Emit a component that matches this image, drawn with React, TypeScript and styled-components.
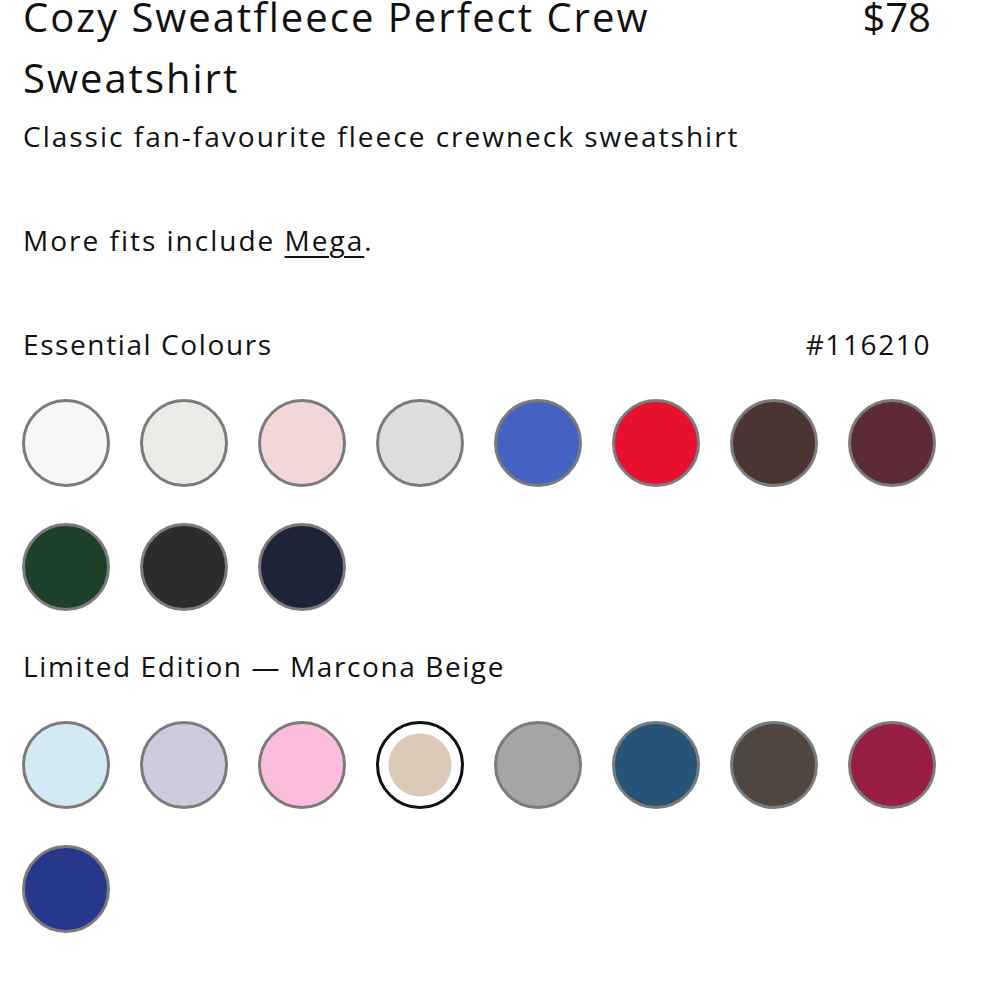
import styled, { createGlobalStyle } from "styled-components";

const GlobalStyle = createGlobalStyle`
  html, body {
    margin: 0;
    padding: 0;
    background: #ffffff;
  }
  body {
    font-family: "Open Sans", "Noto Sans", sans-serif;
    color: #111111;
  }
`;

type Colour = {
  name: string;
  hex: string;
  selected?: boolean;
};

const ESSENTIAL_COLOURS: Colour[] = [
  { name: "White", hex: "#f7f7f7" },
  { name: "Heathered Bone", hex: "#ecebe8" },
  { name: "Flush Pink", hex: "#f2d6d8" },
  { name: "Heathered Core Ultra Light Grey", hex: "#dddddd" },
  { name: "Blue", hex: "#4362c2" },
  { name: "Red", hex: "#e8102d" },
  { name: "Brown", hex: "#4a3530" },
  { name: "Maroon", hex: "#5e2a35" },
  { name: "Green", hex: "#1c4128" },
  { name: "Charcoal", hex: "#2a2d2a" },
  { name: "Navy", hex: "#1e2438" },
];

const LIMITED_COLOURS: Colour[] = [
  { name: "Sky", hex: "#d3eaf4" },
  { name: "Lavender", hex: "#cfcbdc" },
  { name: "Pink", hex: "#fcbcdb" },
  { name: "Marcona Beige", hex: "#dccab9", selected: true },
  { name: "Grey", hex: "#a6a5a5" },
  { name: "Blue", hex: "#255479" },
  { name: "Heathered Brown", hex: "#4f4640" },
  { name: "Raspberry", hex: "#981f43" },
  { name: "Royal", hex: "#27378c" },
];

const Page = styled.main`
  width: 908px;
  margin-top: -14px;
  padding: 0 0 0 23px;
`;

const Header = styled.header`
  display: flex;
  justify-content: space-between;
  align-items: flex-start;
  gap: 24px;
`;

const Title = styled.h1`
  margin: 0;
  max-width: 700px;
  font-size: 40px;
  font-weight: 400;
  line-height: 61px;
  letter-spacing: 2px;
`;

const Price = styled.span`
  font-size: 40px;
  line-height: 61px;
  letter-spacing: 0;
  white-space: nowrap;
`;

const Description = styled.p`
  margin: 8px 0 0;
  font-size: 28px;
  line-height: 40px;
  letter-spacing: 2px;
`;

const FitNote = styled.p`
  margin: 64px 0 0;
  font-size: 28px;
  line-height: 40px;
  letter-spacing: 2px;

  a {
    color: inherit;
    text-decoration: underline;
    text-underline-offset: 5px;
    text-decoration-thickness: 2px;
  }
`;

const Section = styled.section<{ $first?: boolean }>`
  margin-top: ${(props) => (props.$first ? "64px" : "35px")};
`;

const SectionHeader = styled.div`
  display: flex;
  justify-content: space-between;
  font-size: 28px;
  line-height: 40px;
  letter-spacing: 1.6px;
`;

const SwatchGrid = styled.ul`
  list-style: none;
  margin: 35px 0 0 -1px;
  padding: 0;
  display: grid;
  grid-template-columns: repeat(8, 88px);
  column-gap: 30px;
  row-gap: 36px;
`;

const Swatch = styled.button<{ $hex: string; $selected?: boolean }>`
  display: block;
  width: 88px;
  height: 88px;
  padding: 0;
  border-radius: 50%;
  cursor: pointer;
  box-sizing: border-box;
  border: 3px solid ${(props) => (props.$selected ? "#111111" : "#7b7b7b")};
  background: ${(props) => props.$hex};
  ${(props) =>
    props.$selected
      ? `background: radial-gradient(circle, ${props.$hex} 0 31px, #ffffff 32px);`
      : ""}
`;

const SwatchList = ({ colours }: { colours: Colour[] }) => (
  <SwatchGrid>
    {colours.map((colour) => (
      <li key={colour.name}>
        <Swatch
          aria-label={colour.name}
          $hex={colour.hex}
          $selected={colour.selected}
        />
      </li>
    ))}
  </SwatchGrid>
);

const App = () => {
  return (
    <>
      <GlobalStyle />
      <Page>
        <Header>
          <Title>Cozy Sweatfleece Perfect Crew Sweatshirt</Title>
          <Price>$78</Price>
        </Header>
        <Description>
          Classic fan-favourite fleece crewneck sweatshirt
        </Description>
        <FitNote>
          More fits include <a href="#mega">Mega</a>.
        </FitNote>
        <Section $first>
          <SectionHeader>
            <span>Essential Colours</span>
            <span>#116210</span>
          </SectionHeader>
          <SwatchList colours={ESSENTIAL_COLOURS} />
        </Section>
        <Section>
          <SectionHeader>
            <span>Limited Edition — Marcona Beige</span>
          </SectionHeader>
          <SwatchList colours={LIMITED_COLOURS} />
        </Section>
      </Page>
    </>
  );
};

export default App;
